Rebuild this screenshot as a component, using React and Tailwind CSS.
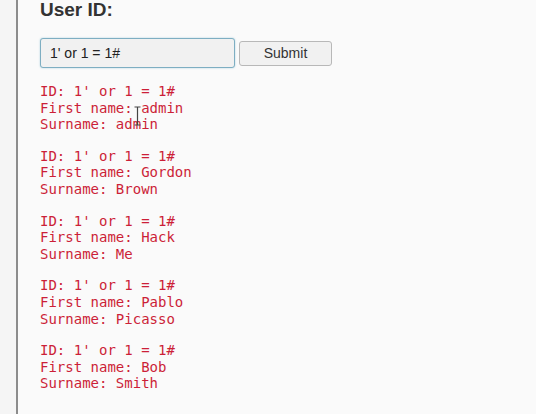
const rows = [
  { first: 'admin', last: 'admin' },
  { first: 'Gordon', last: 'Brown' },
  { first: 'Hack', last: 'Me' },
  { first: 'Pablo', last: 'Picasso' },
  { first: 'Bob', last: 'Smith' },
]

const App = () => {
  return (
    <div className="w-[536px] h-[414px] overflow-hidden flex bg-[#fafafa] font-['Liberation_Sans',Arial,sans-serif]">
      <div className="w-[16px] bg-[#f5f5f5] shrink-0" />
      <div className="border-l-2 border-[#8c8c8c] flex-1 pl-[22px] relative">
        <h1 className="text-[19px] leading-none font-bold text-[#333]">User ID:</h1>

        <div className="flex items-center gap-[4px] mt-[19px]">
          <input
            type="text"
            defaultValue="1' or 1 = 1#"
            className="w-[195px] h-[30px] px-[9px] text-[14px] text-[#222] bg-[#f1f1f1] border border-[#7eaec2] rounded-[3px] outline-none shadow-[0_0_2px_#a9cfdd]"
          />
          <button className="w-[93px] h-[25px] text-[14px] text-[#333] bg-[#f1f1f1] border border-[#b8b8b8] rounded-[3px]">
            Submit
          </button>
        </div>

        <div className="mt-[15px] flex flex-col gap-[15px]">
          {rows.map((r, i) => (
            <pre
              key={i}
              className="font-['DejaVu_Sans_Mono',monospace] text-[14px] leading-[16.6px] text-[#cc1f38]"
            >
              {"ID: 1' or 1 = 1#\nFirst name: " + r.first + '\nSurname: ' + r.last}
            </pre>
          ))}
        </div>

        {/* mouse text cursor */}
        <svg className="absolute left-[116px] top-[106px]" width="7" height="20" viewBox="0 0 7 20">
          <path d="M0.5 1h6M3.5 1v18M0.5 19h6" stroke="#444" strokeWidth="1.2" fill="none" />
        </svg>
      </div>
    </div>
  )
}

export default App
